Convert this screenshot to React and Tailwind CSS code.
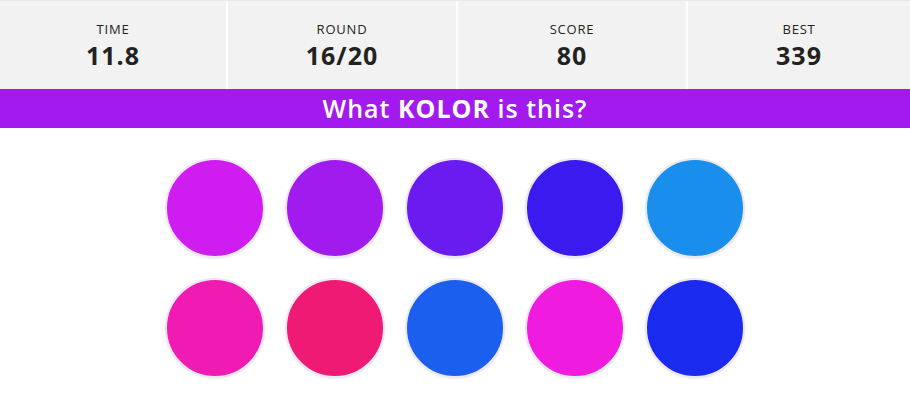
const stats = [
  { label: "TIME", value: "11.8" },
  { label: "ROUND", value: "16/20" },
  { label: "SCORE", value: "80" },
  { label: "BEST", value: "339" },
];

const rows = [
  ["bg-[#cf1cf0]", "bg-[#a11bef]", "bg-[#6a1bef]", "bg-[#3a1aef]", "bg-[#1a8eed]"],
  ["bg-[#ef1bb2]", "bg-[#ef1a74]", "bg-[#1a5fed]", "bg-[#ef1bdf]", "bg-[#1a2aef]"],
];

export default function App() {
  return (
    <div className="min-h-[407px] bg-white font-['Open_Sans','Liberation_Sans',sans-serif] text-[#222]">
      <div className="grid grid-cols-[226px_228px_228px_1fr] gap-x-[2px] border-t border-[#e6e6e6] bg-white">
        {stats.map((s) => (
          <div key={s.label} className="flex h-[88px] flex-col items-center justify-center bg-[#f2f2f2]">
            <div className="text-[13px] leading-[16px] tracking-[0.8px]">{s.label}</div>
            <div className="mt-[3px] text-[25px] font-bold leading-[30px] tracking-[1px]">{s.value}</div>
          </div>
        ))}
      </div>
      <div className="flex h-[39px] items-center justify-center bg-[#a21aef] text-[25px] font-semibold tracking-[1px] text-white">
        <span>
          What <span className="font-bold">KOLOR</span> is this?
        </span>
      </div>
      <div className="flex flex-col items-center gap-[20px] pt-[30px]">
        {rows.map((row, i) => (
          <div key={i} className="flex gap-[20px]">
            {row.map((c, j) => (
              <div
                key={j}
                className={`h-[100px] w-[100px] rounded-full border-2 border-[#ede6f3] shadow-[0_1px_2px_rgba(0,0,0,0.08)] ${c}`}
              />
            ))}
          </div>
        ))}
      </div>
    </div>
  );
}
